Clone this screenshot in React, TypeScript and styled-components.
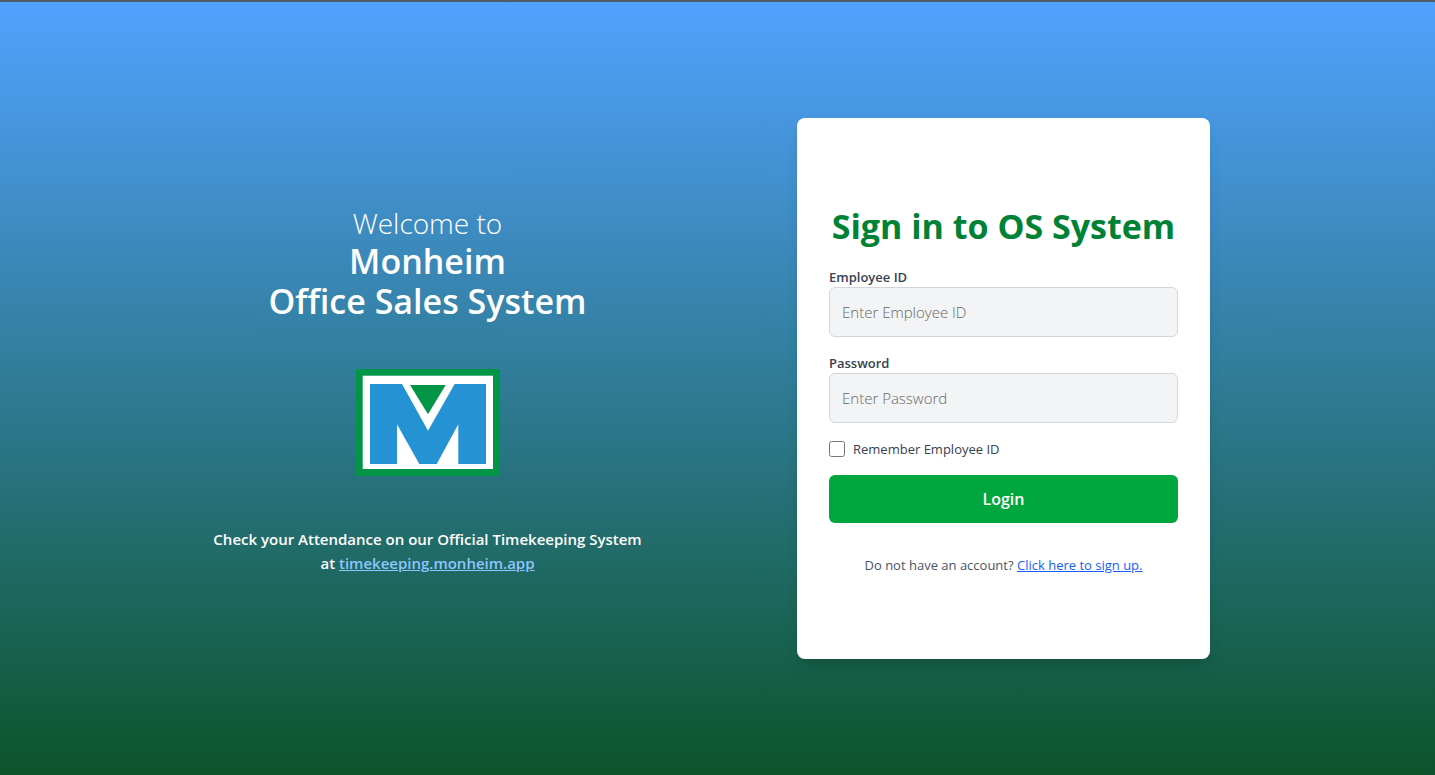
import React from "react";
import styled, { createGlobalStyle } from "styled-components";

const GlobalStyle = createGlobalStyle`
  *, *::before, *::after { box-sizing: border-box; }
  body {
    margin: 0;
    font-family: "Segoe UI", "Open Sans", "Noto Sans", sans-serif;
    font-size: 16px;
    line-height: 24px;
  }
`;

const Page = styled.div`
  min-height: 100vh;
  display: flex;
  align-items: center;
  justify-content: center;
  padding-right: 4px;
  border-top: 2px solid #4e5a66;
  background: linear-gradient(to bottom, #51a2ff, #0d542b);
`;

const Columns = styled.main`
  width: 100%;
  max-width: 1152px;
  display: grid;
  grid-template-columns: 1fr 1fr;
  align-items: center;
  justify-items: center;
`;

const Welcome = styled.section`
  display: flex;
  flex-direction: column;
  align-items: center;
  padding-top: 3px;
  color: #fff;
  text-align: center;
`;

const Title = styled.h1`
  margin: 0;
  font-size: 34px;
  line-height: 40px;
  font-weight: 600;
`;

const Greeting = styled.span`
  display: block;
  font-size: 28px;
  line-height: 36px;
  font-weight: 300;
`;

const Logo = styled.svg`
  display: block;
  width: 144px;
  height: 107px;
  margin: 48px 0 51px;
`;

const Notice = styled.p`
  margin: 0;
  font-weight: 600;
  font-size: 15px;
`;

const TextLink = styled.a<{ $color: string }>`
  color: ${(p) => p.$color};
  text-decoration: underline;
`;

const Card = styled.form`
  width: 100%;
  max-width: 413px;
  padding: 88px 32px 84px;
  display: flex;
  flex-direction: column;
  gap: 16px;
  border-radius: 8px;
  background: #fff;
  box-shadow: 0 10px 15px -3px rgba(0, 0, 0, 0.1), 0 4px 6px -4px rgba(0, 0, 0, 0.1);
`;

const CardTitle = styled.h2`
  margin: 0 0 5px;
  color: #008236;
  font-size: 34px;
  line-height: 40px;
  font-weight: 700;
  text-align: center;
  white-space: nowrap;
`;

const Field = styled.div`
  display: flex;
  flex-direction: column;
`;

const Label = styled.label`
  color: #364153;
  font-size: 13px;
  line-height: 20px;
  font-weight: 600;
`;

const Input = styled.input`
  width: 100%;
  height: 50px;
  padding: 12px;
  border: 1px solid #d1d5dc;
  border-radius: 6px;
  background: #f3f4f6;
  color: #364153;
  font: inherit;
  font-size: 15px;
  font-weight: 300;
  line-height: 24px;
  &::placeholder { color: #666; }
`;

const Remember = styled.label`
  display: flex;
  align-items: center;
  gap: 8px;
  color: #364153;
  font-size: 13px;
  line-height: 20px;
`;

const Checkbox = styled.input`
  width: 16px;
  height: 16px;
  margin: 0;
`;

const LoginButton = styled.button`
  height: 48px;
  border: 0;
  border-radius: 6px;
  background: #00a63e;
  color: #fff;
  font: inherit;
  font-weight: 600;
  cursor: pointer;
`;

const SignUp = styled.p`
  margin: 16px 0 0;
  color: #4a5565;
  font-size: 13px;
  line-height: 20px;
  text-align: center;
`;

export default function App() {
  return (
    <>
      <GlobalStyle />
      <Page>
        <Columns>
          <Welcome>
            <Title>
              <Greeting>Welcome to</Greeting>
              Monheim
              <br />
              Office Sales System
            </Title>
            <Logo viewBox="0 0 144 107" role="img" aria-label="Monheim logo">
              <rect width="144" height="107" fill="#029447" />
              <rect x="6.7" y="6.7" width="130.300" height="93.300" fill="#fff" />
              <path
                d="M14 15h32L72 61.700 98.700 15H130v80h-27.700V55.300L80.700 95H63.300L41 55.300V95H14z"
                fill="#2592d3"
              />
              <path d="M54 16h35.700L72 45.300z" fill="#029447" />
            </Logo>
            <Notice>
              Check your Attendance on our Official Timekeeping System
              <br />
              at{" "}
              <TextLink $color="#8ec5ff" href="#timekeeping">
                timekeeping.monheim.app
              </TextLink>
            </Notice>
          </Welcome>

          <Card>
            <CardTitle>Sign in to OS System</CardTitle>
            <Field>
              <Label htmlFor="employee-id">Employee ID</Label>
              <Input id="employee-id" type="text" placeholder="Enter Employee ID" />
            </Field>
            <Field>
              <Label htmlFor="password">Password</Label>
              <Input id="password" type="password" placeholder="Enter Password" />
            </Field>
            <Remember>
              <Checkbox type="checkbox" />
              Remember Employee ID
            </Remember>
            <LoginButton type="button">Login</LoginButton>
            <SignUp>
              Do not have an account?{" "}
              <TextLink $color="#155dfc" href="#signup">
                Click here to sign up.
              </TextLink>
            </SignUp>
          </Card>
        </Columns>
      </Page>
    </>
  );
}
